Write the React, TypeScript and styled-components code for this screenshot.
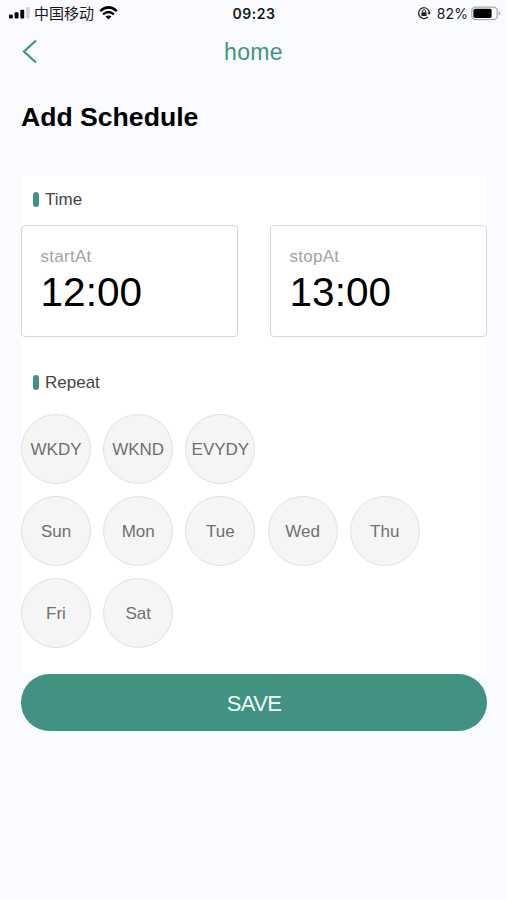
import React from "react";
import styled, { createGlobalStyle } from "styled-components";

const GREEN = "#429284";

const GlobalStyle = createGlobalStyle`
  *, *::before, *::after { box-sizing: border-box; }
  body { margin: 0; background: #fafbff; }
  button { font: inherit; margin: 0; padding: 0; }
`;

const Screen = styled.div`
  display: flex;
  flex-direction: column;
  width: 507px;
  height: 900px;
  overflow: hidden;
  background: #fafbff;
  color: #000;
  font-family: "Liberation Sans", Arial, sans-serif;
`;

const StatusBar = styled.div`
  display: grid;
  grid-template-columns: 1fr auto 1fr;
  align-items: center;
  height: 26px;
  padding: 0 6px 0 9px;
  color: #17181a;
  font-family: Inter, "Noto Sans CJK SC", sans-serif;
  line-height: 20px;
`;

const StatusGroup = styled.div<{ $end?: boolean }>`
  display: flex;
  align-items: center;
  justify-content: ${(p) => (p.$end ? "flex-end" : "flex-start")};
`;

const Carrier = styled.span`
  margin: 0 5px 0 4px;
  font-family: "Noto Sans CJK SC", sans-serif;
  font-size: 15px;
`;

const Clock = styled.span`
  padding: 2px 2px 0 0;
  font-size: 14px;
  font-weight: 600;
  letter-spacing: 0.5px;
`;

const Percent = styled.span`
  margin: 0 3px 0 6px;
  padding-top: 2px;
  font-size: 14px;
  letter-spacing: 0.1px;
`;

const NavBar = styled.header`
  display: grid;
  grid-template-columns: 60px 1fr 60px;
  align-items: center;
  height: 51px;
  color: ${GREEN};
`;

const BackButton = styled.button`
  display: flex;
  width: 40px;
  padding-left: 22px;
  border: 0;
  background: none;
  color: inherit;
`;

const NavTitle = styled.div`
  padding-top: 1px;
  text-align: center;
  font-size: 23px;
  letter-spacing: 0.35px;
  line-height: 30px;
`;

const Heading = styled.h1`
  margin: 24px 0 0 21px;
  height: 74px;
  font-size: 26.6px;
  line-height: 32px;
  font-weight: 700;
`;

const Card = styled.main`
  display: flex;
  flex-direction: column;
  width: 466px;
  height: 499px;
  margin-left: 21px;
  background: #fff;
`;

const SectionTitle = styled.h2`
  display: flex;
  align-items: center;
  gap: 6px;
  height: 50px;
  margin: 0;
  padding-left: 12px;
  font-size: 17px;
  font-weight: 400;
  color: #444;

  &::before {
    content: "";
    width: 6px;
    height: 15px;
    margin-top: -1px;
    border-radius: 3px;
    background: ${GREEN};
  }
`;

const TimeRow = styled.div`
  display: grid;
  grid-template-columns: 217px 217px;
  justify-content: space-between;
  margin-bottom: 21px;
`;

const TimeBox = styled.div`
  height: 112px;
  padding: 20px 18px 0 18.6px;
  border: 1.5px solid #d6d6d6;
  border-radius: 4px;
`;

const TimeLabel = styled.div`
  font-size: 17px;
  line-height: 22px;
  letter-spacing: 0.25px;
  color: #a3a3a3;
`;

const TimeValue = styled.div`
  font-size: 40.5px;
  line-height: 48px;
`;

const Chips = styled.div`
  display: flex;
  flex-direction: column;
  gap: 12px;
  padding-top: 6px;
`;

const ChipRow = styled.div`
  display: flex;
  gap: 12.2px;
`;

const Chip = styled.button`
  display: flex;
  align-items: center;
  justify-content: center;
  width: 70px;
  height: 70px;
  padding-top: 1.5px;
  border: 1.3px solid #e1e1e1;
  border-radius: 50%;
  background: #f5f5f5;
  color: #707070;
  font-size: 17px;
  white-space: nowrap;
`;

const SaveButton = styled.button`
  width: 466px;
  height: 57px;
  margin-left: 21px;
  padding-top: 2px;
  border: 0;
  border-radius: 29px;
  background: ${GREEN};
  color: #eefffb;
  font-size: 22px;
  letter-spacing: -0.6px;
`;

const Signal = () => (
  <svg width="21" height="12" viewBox="0 0 21 12">
    <rect x="0" y="7.5" width="3.9" height="4" rx="1" fill="#000" />
    <rect x="5.6" y="5.3" width="3.9" height="6.2" rx="1" fill="#000" />
    <rect x="11.3" y="2.8" width="3.9" height="8.7" rx="1" fill="#000" />
    <rect x="17" y="0" width="3.8" height="11.5" rx="1" fill="#d3d5d8" />
  </svg>
);

const Wifi = () => (
  <svg width="19" height="14" viewBox="0 0 19 14" fill="none" stroke="#000">
    <path d="M1.2 5.1Q9.5-2.3 17.8 5.1" strokeWidth="2.5" />
    <path d="M4.1 8.3Q9.5 3.6 14.9 8.3" strokeWidth="2.3" />
    <path d="M6.5 10.6Q9.5 8.2 12.5 10.6L9.5 13.6Z" fill="#000" stroke="none" />
  </svg>
);

const RotationLock = () => (
  <svg width="14" height="14" viewBox="0 0 14 14" fill="none" stroke="#222">
    <path d="M10.9 10.9A5.4 5.4 0 1 1 12.4 7.2" strokeWidth="1.2" />
    <path d="M10.3 6.5h3.5L12.1 9Z" fill="#222" stroke="none" />
    <rect x="4.4" y="6.2" width="5.2" height="3.9" rx=".6" fill="#222" stroke="none" />
    <path d="M5.5 6.5V5.2a1.5 1.5 0 0 1 3 0v1.3" strokeWidth="1" />
  </svg>
);

const Battery = () => (
  <svg width="30" height="15" viewBox="0 0 30 15">
    <rect x=".8" y="1.2" width="25.4" height="12.4" rx="3.6" fill="#fff" stroke="#a9abae" strokeWidth="1.3" />
    <rect x="2.4" y="2.8" width="18.2" height="9.2" rx="1.8" fill="#000" />
    <path d="M27.6 5.2Q29.3 5.9 29.3 7.4T27.6 9.6Z" fill="#a9abae" />
  </svg>
);

const Chevron = () => (
  <svg width="16" height="25" viewBox="0 0 16 25" fill="none" stroke="currentColor" strokeWidth="2.2">
    <path d="M14 1.5L2 12.5L14 23.5" />
  </svg>
);

const times = [
  { label: "startAt", value: "12:00" },
  { label: "stopAt", value: "13:00" },
];

const repeatRows = [
  ["WKDY", "WKND", "EVYDY"],
  ["Sun", "Mon", "Tue", "Wed", "Thu"],
  ["Fri", "Sat"],
];

export default function App() {
  return (
    <>
      <GlobalStyle />
      <Screen>
        <StatusBar>
          <StatusGroup>
            <Signal />
            <Carrier>中国移动</Carrier>
            <Wifi />
          </StatusGroup>
          <Clock>09:23</Clock>
          <StatusGroup $end>
            <RotationLock />
            <Percent>82%</Percent>
            <Battery />
          </StatusGroup>
        </StatusBar>
        <NavBar>
          <BackButton aria-label="Back">
            <Chevron />
          </BackButton>
          <NavTitle>home</NavTitle>
        </NavBar>
        <Heading>Add Schedule</Heading>
        <Card>
          <SectionTitle>Time</SectionTitle>
          <TimeRow>
            {times.map((t) => (
              <TimeBox key={t.label}>
                <TimeLabel>{t.label}</TimeLabel>
                <TimeValue>{t.value}</TimeValue>
              </TimeBox>
            ))}
          </TimeRow>
          <SectionTitle>Repeat</SectionTitle>
          <Chips>
            {repeatRows.map((row) => (
              <ChipRow key={row[0]}>
                {row.map((day) => (
                  <Chip key={day}>{day}</Chip>
                ))}
              </ChipRow>
            ))}
          </Chips>
        </Card>
        <SaveButton>SAVE</SaveButton>
      </Screen>
    </>
  );
}
